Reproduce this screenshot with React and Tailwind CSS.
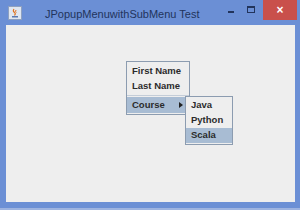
import React from 'react';

function JavaIcon() {
  return (
    <svg width="14" height="14" viewBox="0 0 14 14">
      <rect x="0.5" y="0.5" width="13" height="13" fill="#dfe6f0" stroke="#8ea0c0" />
      <path d="M4 10 h6 v1.5 h-6z" fill="#5a78b0" />
      <path d="M6 3 q-1.5 2 0.5 3.5 q1.5 1 0 3" fill="none" stroke="#e0701a" strokeWidth="1.2" />
      <path d="M8 4 q-1 1.5 0.3 2.5" fill="none" stroke="#e0701a" strokeWidth="1" />
    </svg>
  );
}

const font = { fontFamily: '"Liberation Sans", Arial, sans-serif' };

function Item({ label, active, arrow, tall }) {
  return (
    <div className={`${tall ? 'h-[16px]' : 'h-[15px]'} flex items-center justify-between pl-[5px] pr-[6px] ${active ? 'bg-[#a8bcd3]' : ''}`}>
      <span>{label}</span>
      {arrow && <span className="w-0 h-0 border-y-[3px] border-y-transparent border-l-[4px] border-l-[#222]" />}
    </div>
  );
}

export default function App() {
  return (
    <div className="w-[300px] h-[210px] bg-[#6b8fd5] flex flex-col relative overflow-hidden">
      {/* title bar */}
      <div className="h-[25px] flex items-start">
        <div className="pl-[8px] pt-[6px]">
          <JavaIcon />
        </div>
        <span className="ml-[23px] mt-[6px] text-[11px] text-[#22345c]" style={font}>
          JPopupMenuwithSubMenu Test
        </span>
        <div className="ml-auto flex items-start">
          <div className="w-[6px] h-[2px] bg-[#22345c] mt-[11px]" />
          <div className="ml-[13px] mt-[6px] w-[8px] h-[7px] border border-[#22345c] border-t-2" />
          <div className="ml-[8px] mr-[3px] w-[34px] h-[20px] bg-[#c9504b] flex items-center justify-center text-white text-[12px] font-bold" style={font}>
            ×
          </div>
        </div>
      </div>
      {/* content */}
      <div className="ml-[6px] mr-[5px] h-[177px] bg-[#eeeeee]" />
      <div className="h-[6px]" />
      <div className="h-[2px] bg-[#9db3e0]" />

      {/* popup menu */}
      <div className="absolute left-[126px] top-[61px] w-[64px] bg-[#eeeeee] border border-[#8c9cb0] pt-[2px] pb-[1px] text-[9.5px] font-bold text-[#2b2b2b]" style={font}>
        <Item label="First Name" />
        <Item label="Last Name" />
        <div className="h-[1px] bg-[#c4cdd8] my-[1px]" />
        <Item label="Course" active arrow tall />
      </div>

      {/* submenu */}
      <div className="absolute left-[185px] top-[96px] w-[48px] bg-[#eeeeee] border border-[#8c9cb0] pt-[1px] pb-[1px] text-[9.5px] font-bold text-[#2b2b2b]" style={font}>
        <Item label="Java" />
        <Item label="Python" />
        <Item label="Scala" active />
      </div>
    </div>
  );
}
